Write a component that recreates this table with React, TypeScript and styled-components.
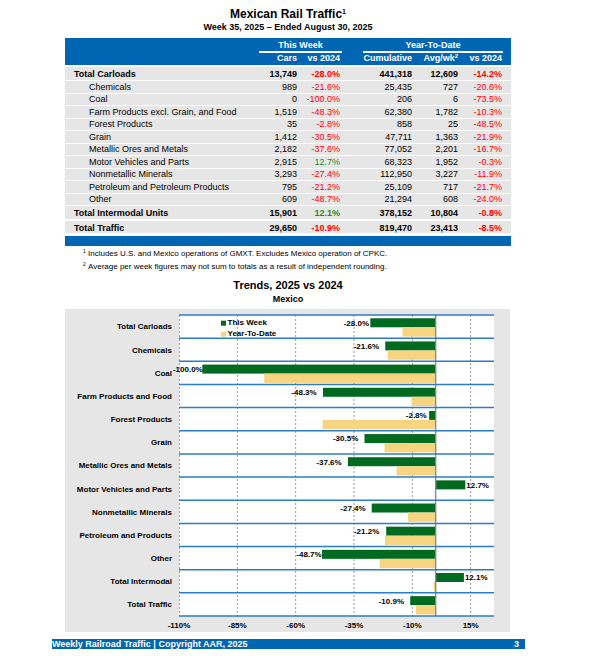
import React from 'react';
import styled, { createGlobalStyle } from 'styled-components';

const BLUE = '#0066b3';
const GRAY = '#e6e6e6';
const RED = '#ff0000';
const GREEN_TXT = '#1f8a2e';
const BAR_GREEN = '#006a21';
const BAR_YELLOW = '#f7d580';
const FONT = '"Liberation Sans", Arial, Helvetica, sans-serif';

const GlobalStyle = createGlobalStyle`
  html, body { margin: 0; padding: 0; background: #fff; }
  body { font-family: ${FONT}; color: #000; }
`;

const Page = styled.div`
  width: 604px;
  height: 656px;
  box-sizing: border-box;
  padding: 7px 0 0 65px;
  overflow: hidden;
`;

const Column = styled.div`
  width: 446px;
  display: flex;
  flex-direction: column;
`;

const Title = styled.h1`
  margin: 0;
  font-size: 12px;
  line-height: 14px;
  font-weight: bold;
  text-align: center;
`;

const SubTitle = styled.h2`
  margin: 0;
  font-size: 9px;
  line-height: 12px;
  font-weight: bold;
  text-align: center;
`;

const Sup = styled.sup<{ $size: number; $raise: number }>`
  font-size: ${(p) => p.$size}px;
  line-height: 0;
  vertical-align: ${(p) => p.$raise}px;
`;

const COLS = '194px 38px 43px 72px 46px 44px';

const Table = styled.div`
  margin-top: 5px;
  display: flex;
  flex-direction: column;
  font-size: 9px;
`;

const TableHead = styled.div`
  background: ${BLUE};
  color: #fff;
  font-weight: bold;
  display: grid;
  grid-template-columns: ${COLS};
  padding: 2px 0 1px;
  height: 24px;
`;

const GroupCell = styled.div<{ $col: string; $ml: number; $mr: number }>`
  grid-column: ${(p) => p.$col};
  grid-row: 1;
  margin-left: ${(p) => p.$ml}px;
  margin-right: ${(p) => p.$mr}px;
  text-align: center;
  line-height: 10px;
  padding-bottom: 1px;
  border-bottom: 2px solid #fff;
`;

const HeadCell = styled.div<{ $col: number }>`
  grid-column: ${(p) => p.$col};
  grid-row: 2;
  text-align: right;
  line-height: 11px;
  white-space: nowrap;
`;

const Body = styled.div`
  margin-top: 2px;
  display: flex;
  flex-direction: column;
`;

const DataRow = styled.div<{ $h: number; $pt: number; $gap: number; $bold: boolean }>`
  display: grid;
  grid-template-columns: ${COLS};
  background: ${GRAY};
  height: ${(p) => p.$h - p.$pt}px;
  padding-top: ${(p) => p.$pt}px;
  line-height: ${(p) => p.$h - p.$pt}px;
  border-bottom: ${(p) => p.$gap}px solid #fff;
  font-weight: ${(p) => (p.$bold ? 'bold' : 'normal')};
`;

const LabelCell = styled.div<{ $indent: boolean }>`
  padding-left: ${(p) => (p.$indent ? 24 : 9)}px;
  white-space: nowrap;
`;

const NumCell = styled.div<{ $tone?: 'neg' | 'pos' }>`
  text-align: right;
  white-space: nowrap;
  color: ${(p) => (p.$tone === 'neg' ? RED : p.$tone === 'pos' ? GREEN_TXT : '#000')};
`;

const BlueBar = styled.div`
  margin-top: 3px;
  height: 10px;
  background: ${BLUE};
`;

const Notes = styled.div`
  margin-top: 1px;
  padding-left: 18px;
  font-size: 8px;
  line-height: 13px;
`;

const Note = styled.div`
  white-space: nowrap;
`;

const NoteMark = styled.span`
  display: inline-block;
  width: 5px;
  font-size: 5px;
  line-height: 0;
  vertical-align: 3px;
`;

const ChartTitle = styled.h2`
  margin: 5.7px 0 0;
  font-size: 11px;
  line-height: 13px;
  font-weight: bold;
  text-align: center;
`;

const ChartSub = styled.h3`
  margin: 2px 0 0;
  font-size: 9px;
  line-height: 11px;
  font-weight: bold;
  text-align: center;
`;

const ChartPanel = styled.div`
  margin-top: 4.3px;
  width: 445px;
  height: 323px;
  background: ${GRAY};
`;

const ChartSvg = styled.svg`
  display: block;
`;

const ChartText = styled.text`
  font-family: ${FONT};
  font-weight: bold;
  font-size: 8px;
  fill: #000;
`;

const Footer = styled.div`
  margin: 7px 0 0 -13px;
  width: 473px;
  height: 10px;
  box-sizing: border-box;
  padding-right: 6px;
  background: ${BLUE};
  color: #fff;
  font-size: 9px;
  line-height: 10px;
  font-weight: bold;
  display: flex;
  justify-content: space-between;
  white-space: nowrap;
`;

type Kind = 'total' | 'item' | 'intermodal' | 'grand';
type Row = [string, string, number, string, string, number, Kind];

const rows: Row[] = [
  ['Total Carloads', '13,749', -28.0, '441,318', '12,609', -14.2, 'total'],
  ['Chemicals', '989', -21.6, '25,435', '727', -20.6, 'item'],
  ['Coal', '0', -100.0, '206', '6', -73.5, 'item'],
  ['Farm Products excl. Grain, and Food', '1,519', -48.3, '62,380', '1,782', -10.3, 'item'],
  ['Forest Products', '35', -2.8, '858', '25', -48.5, 'item'],
  ['Grain', '1,412', -30.5, '47,711', '1,363', -21.9, 'item'],
  ['Metallic Ores and Metals', '2,182', -37.6, '77,052', '2,201', -16.7, 'item'],
  ['Motor Vehicles and Parts', '2,915', 12.7, '68,323', '1,952', -0.3, 'item'],
  ['Nonmetallic Minerals', '3,293', -27.4, '112,950', '3,227', -11.9, 'item'],
  ['Petroleum and Petroleum Products', '795', -21.2, '25,109', '717', -21.7, 'item'],
  ['Other', '609', -48.7, '21,294', '608', -24.0, 'item'],
  ['Total Intermodal Units', '15,901', 12.1, '378,152', '10,804', -0.8, 'intermodal'],
  ['Total Traffic', '29,650', -10.9, '819,470', '23,413', -8.5, 'grand'],
];

const rowGeom: Record<Kind, { h: number; pt: number; gap: number }> = {
  total: { h: 13, pt: 0.5, gap: 1 },
  item: { h: 11.5, pt: 0.5, gap: 1 },
  intermodal: { h: 13, pt: 0.5, gap: 2 },
  grand: { h: 12, pt: 1.5, gap: 0 },
};

const pct = (v: number) => `${v.toFixed(1)}%`;
const tone = (v: number): 'neg' | 'pos' => (v < 0 ? 'neg' : 'pos');

// chart geometry (panel coordinates)
const CW = 445;
const CH = 323;
const PX0 = 114;
const PX1 = 429;
const PY0 = 6;
const PY1 = 307;
const xs = (v: number) => PX0 + ((v + 110) * (PX1 - PX0)) / 135;
const BAND = (PY1 - PY0) / 13;

type ChartItem = [string, number, number, number | null];
const chart: ChartItem[] = [
  ['Total Carloads', -28.0, -14.2, 369],
  ['Chemicals', -21.6, -20.6, 379],
  ['Coal', -100.0, -73.5, 202.7],
  ['Farm Products and Food', -48.3, -10.3, 316.7],
  ['Forest Products', -2.8, -48.5, 426.7],
  ['Grain', -30.5, -21.9, 358.3],
  ['Metallic Ores and Metals', -37.6, -16.7, 341.7],
  ['Motor Vehicles and Parts', 12.7, -0.3, null],
  ['Nonmetallic Minerals', -27.4, -11.9, 365.7],
  ['Petroleum and Products', -21.2, -21.7, 379.3],
  ['Other', -48.7, -24.0, 321.7],
  ['Total Intermodal', 12.1, -0.8, null],
  ['Total Traffic', -10.9, -8.5, 404],
];

const ticks = [-110, -85, -60, -35, -10, 15];

function TrendChart() {
  const zero = xs(0);
  return (
    <ChartSvg width={CW} height={CH} viewBox={`0 0 ${CW} ${CH}`}>
      <rect x={PX0} y={PY0} width={PX1 - PX0} height={PY1 - PY0} fill="#fff" />
      {ticks.map((t) => (
        <line
          key={`g${t}`}
          x1={xs(t) + (t === -110 ? 0.5 : 0)}
          x2={xs(t) + (t === -110 ? 0.5 : 0)}
          y1={PY0}
          y2={PY1}
          stroke="#9a9a9a"
          strokeWidth={1}
          strokeDasharray="2 2"
        />
      ))}
      {chart.map(([name, wk, ytd, labelEnd], i) => {
        const top = PY0 + i * BAND;
        const gx = Math.min(xs(wk), zero);
        const gw = Math.abs(xs(wk) - zero);
        const yx = Math.min(xs(ytd), zero);
        const yw = Math.abs(xs(ytd) - zero);
        const labelY = top + 3.3 + 4.5 + 2.9;
        return (
          <g key={name}>
            <rect x={gx} y={top + 3.3} width={gw} height={9} fill={BAR_GREEN} />
            <rect x={yx} y={top + 12.3} width={yw} height={9.3} fill={BAR_YELLOW} />
            <ChartText x={107} y={top + BAND / 2 + 2.9} textAnchor="end">
              {name}
            </ChartText>
            {labelEnd !== null ? (
              <ChartText x={labelEnd - 65} y={labelY} textAnchor="end">
                {pct(wk)}
              </ChartText>
            ) : (
              <ChartText x={xs(wk) + 1} y={labelY} textAnchor="start">
                {pct(wk)}
              </ChartText>
            )}
          </g>
        );
      })}
      <line x1={zero} x2={zero} y1={PY0} y2={PY1} stroke="#8a8a8a" strokeWidth={1.4} />
      {Array.from({ length: 14 }, (_, i) => (
        <line
          key={`b${i}`}
          x1={PX0}
          x2={PX1}
          y1={PY0 + i * BAND}
          y2={PY0 + i * BAND}
          stroke="#2b7dca"
          strokeWidth={1.5}
        />
      ))}
      <rect x={156} y={11.7} width={5} height={5} fill={BAR_GREEN} />
      <ChartText x={162.5} y={16.4}>This Week</ChartText>
      <rect x={156} y={22.7} width={5} height={5} fill={BAR_YELLOW} />
      <ChartText x={162.5} y={27.4}>Year-To-Date</ChartText>
      {ticks.map((t) => (
        <ChartText key={`t${t}`} x={xs(t)} y={319.3} textAnchor="middle">
          {`${t}%`}
        </ChartText>
      ))}
    </ChartSvg>
  );
}

export default function App() {
  return (
    <>
      <GlobalStyle />
      <Page>
        <Column>
          <Title>
            Mexican Rail Traffic<Sup $size={7} $raise={4}>1</Sup>
          </Title>
          <SubTitle>Week 35, 2025 – Ended August 30, 2025</SubTitle>

          <Table>
            <TableHead>
              <GroupCell $col="2 / 4" $ml={0} $mr={-2}>
                This Week
              </GroupCell>
              <GroupCell $col="4 / 7" $ml={23} $mr={-1}>
                Year-To-Date
              </GroupCell>
              <HeadCell $col={2}>Cars</HeadCell>
              <HeadCell $col={3}>vs 2024</HeadCell>
              <HeadCell $col={4}>Cumulative</HeadCell>
              <HeadCell $col={5}>
                Avg/wk<Sup $size={6} $raise={3}>2</Sup>
              </HeadCell>
              <HeadCell $col={6}>vs 2024</HeadCell>
            </TableHead>
            <Body>
              {rows.map(([label, cars, wk, cum, avg, ytd, kind]) => {
                const g = rowGeom[kind];
                return (
                  <DataRow key={label} $h={g.h} $pt={g.pt} $gap={g.gap} $bold={kind !== 'item'}>
                    <LabelCell $indent={kind === 'item'}>{label}</LabelCell>
                    <NumCell>{cars}</NumCell>
                    <NumCell $tone={tone(wk)}>{pct(wk)}</NumCell>
                    <NumCell>{cum}</NumCell>
                    <NumCell>{avg}</NumCell>
                    <NumCell $tone={tone(ytd)}>{pct(ytd)}</NumCell>
                  </DataRow>
                );
              })}
            </Body>
            <BlueBar />
          </Table>

          <Notes>
            <Note>
              <NoteMark>1</NoteMark>Includes U.S. and Mexico operations of GMXT. Excludes Mexico operation of CPKC.
            </Note>
            <Note>
              <NoteMark>2</NoteMark>Average per week figures may not sum to totals as a result of independent rounding.
            </Note>
          </Notes>

          <ChartTitle>Trends, 2025 vs 2024</ChartTitle>
          <ChartSub>Mexico</ChartSub>
          <ChartPanel>
            <TrendChart />
          </ChartPanel>

          <Footer>
            <span>Weekly Railroad Traffic | Copyright AAR, 2025</span>
            <span>3</span>
          </Footer>
        </Column>
      </Page>
    </>
  );
}
